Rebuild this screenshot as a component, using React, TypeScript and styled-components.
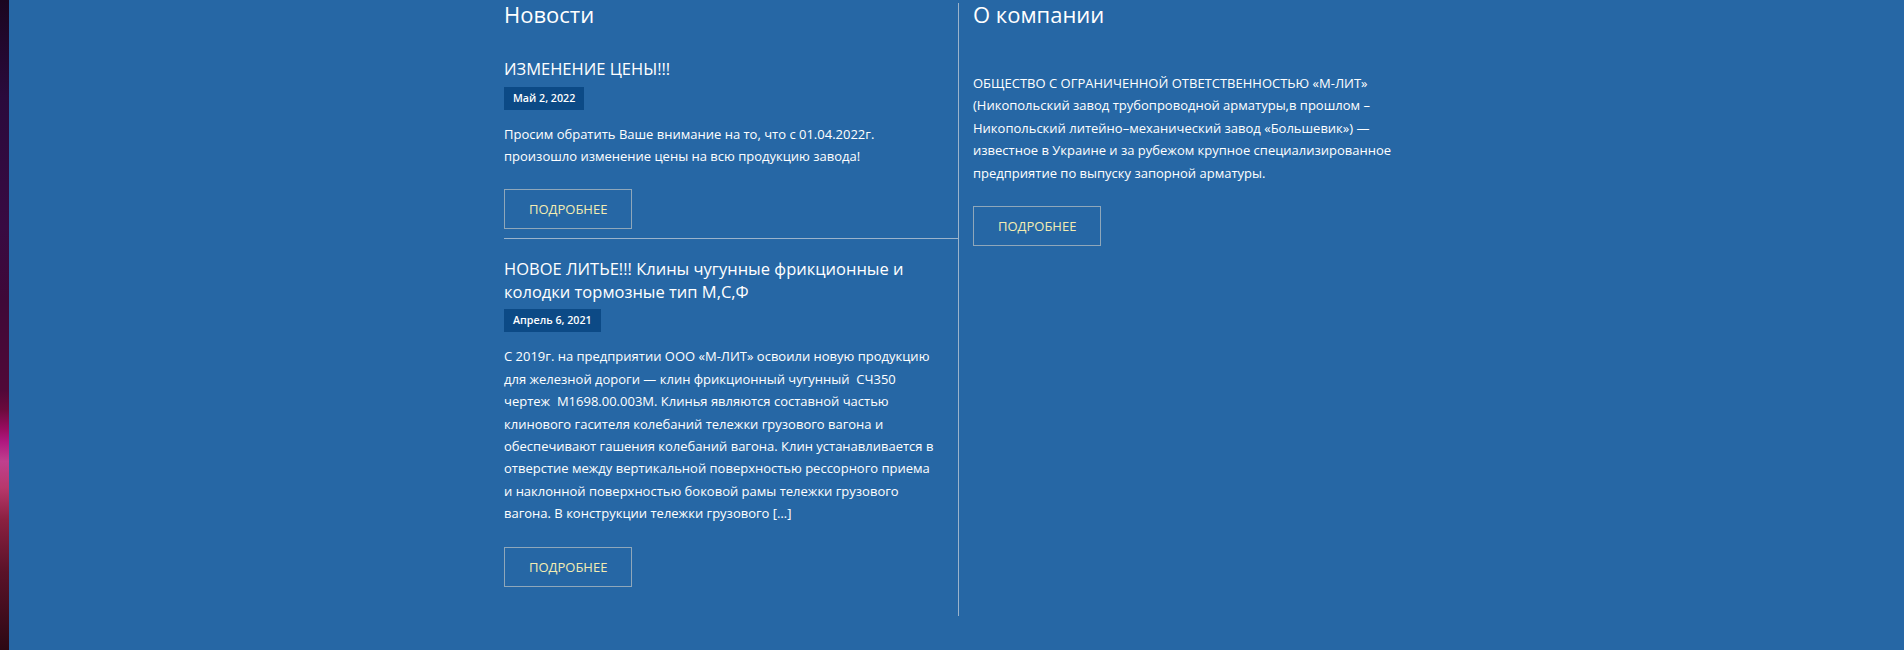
import React from "react";
import styled, { createGlobalStyle } from "styled-components";

const GlobalStyle = createGlobalStyle`
  html, body {
    margin: 0;
    padding: 0;
    background: #2667a5;
  }
  body {
    font-family: "Open Sans", "Noto Sans", "DejaVu Sans", sans-serif;
    color: #ffffff;
    -webkit-font-smoothing: antialiased;
  }
`;

const Page = styled.div`
  display: flex;
  min-height: 650px;
  background: #2667a5;
`;

const SideStrip = styled.div`
  width: 9px;
  flex: none;
  background: linear-gradient(
    to bottom,
    #1a0520 0%,
    #2a0a3c 15%,
    #380a42 35%,
    #3e0838 46%,
    #500838 60%,
    #6a0a3c 63%,
    #9a0c60 66%,
    #b01880 68%,
    #c0408e 71%,
    #b8386c 75%,
    #8a2040 80%,
    #5a1228 88%,
    #2c0814 100%
  );
`;

const Main = styled.main`
  flex: 1;
  padding-left: 480px;
  padding-top: 3px;
`;

const Columns = styled.div`
  display: grid;
  grid-template-columns: 470px 469px;
  align-items: start;
`;

const NewsColumn = styled.section`
  border-right: 1px solid #9bb3cb;
  padding: 0 0 29px 15px;
`;

const AboutColumn = styled.section`
  padding: 0 15px 0 14px;
`;

const SectionTitle = styled.h2`
  margin: 0;
  font-size: 22px;
  line-height: 22px;
  font-weight: 400;
  color: #ffffff;
`;

const NewsList = styled.div`
  display: flex;
  flex-direction: column;
  margin-top: 33px;
`;

const NewsItem = styled.article<{ $last?: boolean }>`
  padding: ${(p) => (p.$last ? "19px" : "0")} 18px ${(p) => (p.$last ? "0" : "9px")} 0;
  border-bottom: ${(p) => (p.$last ? "none" : "1px solid #9bb3cb")};
`;

const NewsTitle = styled.h3`
  margin: 0 0 6px;
  font-size: 16.5px;
  line-height: 22.5px;
  font-weight: 400;
  color: #ffffff;
`;

const DateBadge = styled.span`
  display: block;
  width: fit-content;
  background: #0c4a86;
  color: #ffffff;
  font-size: 10.7px;
  font-weight: 600;
  line-height: 15px;
  padding: 4px 9px;
`;

const Text = styled.p<{ $top?: number }>`
  margin: ${(p) => p.$top ?? 13}px 0 0;
  font-size: 13px;
  line-height: 22.4px;
  color: #ffffff;
`;

const MoreButton = styled.a`
  display: inline-flex;
  align-items: center;
  justify-content: center;
  box-sizing: border-box;
  height: 40px;
  padding: 0 24px;
  margin-top: 22px;
  border: 1px solid #8fa7ba;
  color: #f3ecb2;
  font-size: 13px;
  text-transform: uppercase;
  text-decoration: none;
  cursor: pointer;
`;

const ButtonRow = styled.div`
  display: flex;
`;

export default function App() {
  return (
    <>
      <GlobalStyle />
      <Page>
        <SideStrip />
        <Main>
          <Columns>
            <NewsColumn>
              <SectionTitle>Новости</SectionTitle>
              <NewsList>
                <NewsItem>
                  <NewsTitle>ИЗМЕНЕНИЕ ЦЕНЫ!!!</NewsTitle>
                  <DateBadge>Май 2, 2022</DateBadge>
                  <Text>
                    Просим обратить Ваше внимание на то, что с 01.04.2022г.
                    произошло изменение цены на всю продукцию завода!
                  </Text>
                  <ButtonRow>
                    <MoreButton>Подробнее</MoreButton>
                  </ButtonRow>
                </NewsItem>
                <NewsItem $last>
                  <NewsTitle>
                    НОВОЕ ЛИТЬЕ!!! Клины чугунные фрикционные и колодки тормозные
                    тип М,С,Ф
                  </NewsTitle>
                  <DateBadge>Апрель 6, 2021</DateBadge>
                  <Text>
                    С 2019г. на предприятии ООО «М-ЛИТ» освоили новую продукцию
                    для железной дороги — клин фрикционный чугунный{"\u00a0 "}СЧ350
                    чертеж{"\u00a0 "}М1698.00.003М. Клинья являются составной частью
                    клинового гасителя колебаний тележки грузового вагона и
                    обеспечивают гашения колебаний вагона. Клин устанавливается в
                    отверстие между вертикальной поверхностью рессорного приема и
                    наклонной поверхностью боковой рамы тележки грузового вагона. В
                    конструкции тележки грузового […]
                  </Text>
                  <ButtonRow>
                    <MoreButton>Подробнее</MoreButton>
                  </ButtonRow>
                </NewsItem>
              </NewsList>
            </NewsColumn>
            <AboutColumn>
              <SectionTitle>О компании</SectionTitle>
              <Text $top={47}>
                ОБЩЕСТВО С ОГРАНИЧЕННОЙ ОТВЕТСТВЕННОСТЬЮ «М-ЛИТ» (Никопольский
                завод трубопроводной арматуры,в прошлом – Никопольский
                литейно–механический завод «Большевик») — известное в Украине и
                за рубежом крупное специализированное предприятие по выпуску
                запорной арматуры.
              </Text>
              <ButtonRow>
                <MoreButton>Подробнее</MoreButton>
              </ButtonRow>
            </AboutColumn>
          </Columns>
        </Main>
      </Page>
    </>
  );
}
